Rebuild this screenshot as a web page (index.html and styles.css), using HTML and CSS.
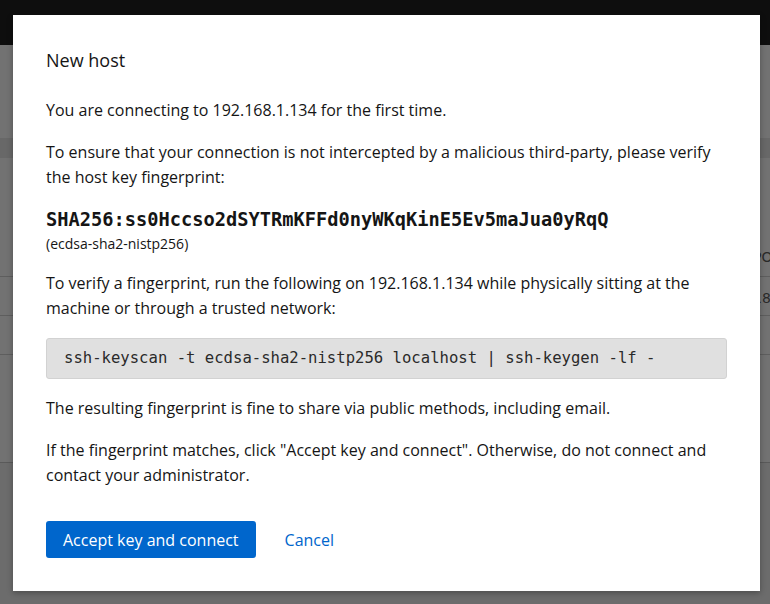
FILE: index.html
```html
<!DOCTYPE html>
<html>
<head>
<meta charset="utf-8">
<link rel="stylesheet" href="styles.css">
</head>
<body>
<div class="page">
  <div class="topbar"></div>
  <div class="area">
    <div class="gap1"></div>
    <div class="band"></div>
    <div class="rows">
      <div class="row r1"><span class="peek">PO</span></div>
      <div class="row r2"><span class="peek">18</span></div>
      <div class="row r3"></div>
      <div class="row r4"></div>
    </div>
    <div class="lower"></div>
  </div>
</div>
<div class="modal" role="dialog">
  <h1 class="title">New host</h1>
  <p class="p1">You are connecting to 192.168.1.134 for the first time.</p>
  <p>To ensure that your connection is not intercepted by a malicious third-party, please verify the host key fingerprint:</p>
  <div class="fp">
    <div class="fp-key">SHA256:ss0Hccso2dSYTRmKFFd0nyWKqKinE5Ev5maJua0yRqQ</div>
    <div class="fp-type">(ecdsa-sha2-nistp256)</div>
  </div>
  <p>To verify a fingerprint, run the following on 192.168.1.134 while physically sitting at the machine or through a trusted network:</p>
  <pre class="code">ssh-keyscan -t ecdsa-sha2-nistp256 localhost | ssh-keygen -lf -</pre>
  <p>The resulting fingerprint is fine to share via public methods, including email.</p>
  <p>If the fingerprint matches, click "Accept key and connect". Otherwise, do not connect and contact your administrator.</p>
  <div class="actions">
    <button class="btn-primary">Accept key and connect</button>
    <button class="btn-link">Cancel</button>
  </div>
</div>
</body>
</html>
```
FILE: styles.css
```css
* { box-sizing: border-box; }
html, body { margin: 0; padding: 0; }
body {
  width: 770px;
  height: 604px;
  overflow: hidden;
  background: #707070;
  font-family: "Open Sans", "Liberation Sans", sans-serif;
  position: relative;
}
.page { display: flex; flex-direction: column; height: 604px; }
.topbar { height: 45px; background: #0e0e0e; }
.area { flex: 1; display: flex; flex-direction: column; background: #727272; }
.gap1 { height: 93px; }
.band { height: 20px; background: #686868; }
.rows { display: flex; flex-direction: column; padding-top: 80px; }
.row { height: 39px; border-bottom: 1px solid #5e5e5e; position: relative; font-family: "DejaVu Sans", sans-serif; font-size: 14px; line-height: 16px; color: #2a2a2a; overflow: hidden; }
.row .peek { position: absolute; left: 753px; top: 11px; }
.r2 .peek { top: 13px; }
.r4 { height: 108px; border-bottom: 1px solid #5a5a5a; }
.lower { flex: 1; background: #6c6c6c; }

.modal {
  position: absolute;
  left: 13px;
  top: 15px;
  width: 747px;
  height: 576px;
  background: #fff;
  box-shadow: 0 2px 6px rgba(0,0,0,0.3);
  padding: 33px 33px 0 33px;
  color: #151515;
  font-size: 16px;
  line-height: 25px;
}
.title {
  margin: 0 0 26px 0;
  font-size: 18px;
  font-weight: 400;
  line-height: 24px;
}
.modal p { margin: 0 0 17px 0; }
.fp { margin: 0 0 17px 0; }
.fp-key {
  font-family: "DejaVu Sans Mono", monospace;
  font-weight: 700;
  font-size: 18.7px;
  line-height: 24px;
  padding-top: 1px;
}
.fp-type {
  font-size: 14px;
  line-height: 21px;
  padding-top: 1px;
}
.code {
  margin: 0 0 17px 0;
  background: #e0e0e0;
  border: 1px solid #d2d2d2;
  border-radius: 3px;
  padding: 8px 17px;
  font-family: "DejaVu Sans Mono", monospace;
  font-size: 15.6px;
  line-height: 23px;
  color: #2a2a2a;
}
.actions {
  display: flex;
  align-items: center;
  gap: 12px;
  margin-top: 33px;
}
.btn-primary {
  background: #0066cc;
  color: #fff;
  border: none;
  border-radius: 3px;
  height: 37px;
  padding: 0 17px;
  font-family: inherit;
  font-size: 16px;
}
.btn-link {
  background: none;
  border: none;
  color: #0066cc;
  font-family: inherit;
  font-size: 16px;
  padding: 0 17px;
  height: 37px;
}
```
